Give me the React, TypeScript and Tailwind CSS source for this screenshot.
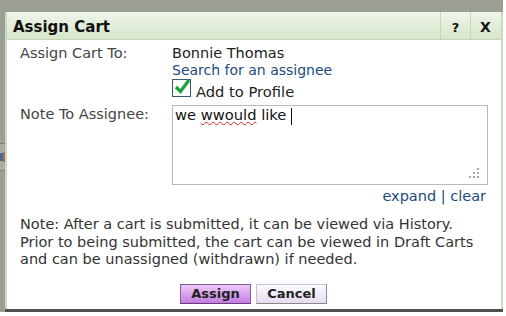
import React from "react";

const font = { fontFamily: '"DejaVu Sans", Verdana, sans-serif' };

export default function App() {
  return (
    <div className="w-[506px] h-[316px] bg-white overflow-hidden" style={font}>
      <div className="w-[503px] h-[312px] bg-[#9a9e95] flex">
        {/* background page bits */}
        <div className="w-[5px] flex flex-col">
          <div className="h-[143px]" />
          <div className="h-[28px] border-y border-[#7d8178] bg-[#a9aca4] flex items-center">
            <div className="w-[3px] h-[8px] bg-[#3c6ea0]" />
            <div className="w-[2px] h-[10px] bg-[#b86a3a]" />
          </div>
        </div>
        <div className="flex-1 flex flex-col pt-[12px]">
          <div className="h-[297px] bg-white border-l-2 border-r-2 border-[#c9dcbd] flex flex-col text-[14.5px] text-[#333] overflow-hidden">
            {/* title bar */}
            <div className="h-[28px] shrink-0 flex items-stretch bg-gradient-to-b from-[#eef5e9] to-[#d7e6cb] border-b border-[#c2d6b4]">
              <div className="flex-1 pl-[6px] pt-[4px] flex items-center font-bold text-[15px] text-[#111]">
                Assign Cart
              </div>
              <div className="w-[30px] border-l border-[#c5d6b9] pt-[4px] flex items-center justify-center font-bold text-[13px] text-[#111]">
                ?
              </div>
              <div className="w-[31px] border-l border-[#c5d6b9] pt-[4px] pr-[1px] flex items-center justify-center font-bold text-[14px] text-[#111]">
                X
              </div>
            </div>

            <div className="flex pl-[13px] pt-[5px] leading-[17px]">
              <div className="w-[152px] text-[#444]">Assign Cart To:</div>
              <div className="flex flex-col">
                <div className="text-[#222]">Bonnie Thomas</div>
                <div className="text-[14px] text-[#1c4c7c] leading-[17px]">Search for an assignee</div>
                <div className="flex items-end gap-[5px]">
                  <div className="w-[19px] h-[18px] border border-[#3b5775] bg-white relative">
                    <svg className="absolute left-[1px] top-[-2px]" width="17" height="17" viewBox="0 0 17 17">
                      <path d="M2 9 L6.5 13.5 L15 2" fill="none" stroke="#19a33a" strokeWidth="3.2" />
                    </svg>
                  </div>
                  <span className="text-[14.7px] text-[#222] leading-[16px] translate-y-[3px]">Add to Profile</span>
                </div>
              </div>
            </div>

            <div className="flex pl-[13px] pt-[8px] leading-[17px]">
              <div className="w-[152px] text-[#444] pt-[1px]">Note To Assignee:</div>
              <div className="flex flex-col">
                <div className="w-[316px] h-[80px] border border-[#b8b8b8] relative px-[2px] pt-0">
                  <span className="text-[14.7px] text-[#111] leading-[17px]">
                    we{" "}
                    <span className="underline decoration-wavy decoration-[#d22] decoration-1">wwould</span> like{" "}
                    <span className="inline-block w-[1px] h-[17px] bg-[#111] align-middle" />
                  </span>
                  <svg className="absolute right-[8px] bottom-[6px]" width="10" height="10" viewBox="0 0 10 10">
                    <g fill="#aaa">
                      <rect x="8" y="0" width="2" height="2" />
                      <rect x="4" y="4" width="2" height="2" />
                      <rect x="8" y="4" width="2" height="2" />
                      <rect x="0" y="8" width="2" height="2" />
                      <rect x="4" y="8" width="2" height="2" />
                      <rect x="8" y="8" width="2" height="2" />
                    </g>
                  </svg>
                </div>
                <div className="text-right text-[14.5px] text-[#1c4c7c] pt-[2px] pr-[2px] leading-[18px]">
                  expand | clear
                </div>
              </div>
            </div>

            <div className="pl-[13px] pt-[11px] leading-[17.5px] text-[#333]">
              <div>Note: After a cart is submitted, it can be viewed via History.</div>
              <div>Prior to being submitted, the cart can be viewed in Draft Carts</div>
              <div>and can be unassigned (withdrawn) if needed.</div>
            </div>

            <div className="flex justify-center gap-[5px] pt-[15px] pr-[1px]">
              <button className="w-[71px] h-[20px] border border-[#8a5aa0] border-b-[#6a3a80] bg-gradient-to-b from-[#ecc9f7] to-[#c47be0] font-bold text-[13px] leading-[18px] text-[#222]">
                Assign
              </button>
              <button className="w-[71px] h-[20px] border border-[#c9c0d0] border-b-[#888] border-r-[#888] bg-gradient-to-b from-[#fdfaff] to-[#e6dcef] font-bold text-[13px] leading-[18px] text-[#222]">
                Cancel
              </button>
            </div>
          </div>
          <div className="h-[3px] bg-[#4f4f4f]" />
        </div>
      </div>
    </div>
  );
}
